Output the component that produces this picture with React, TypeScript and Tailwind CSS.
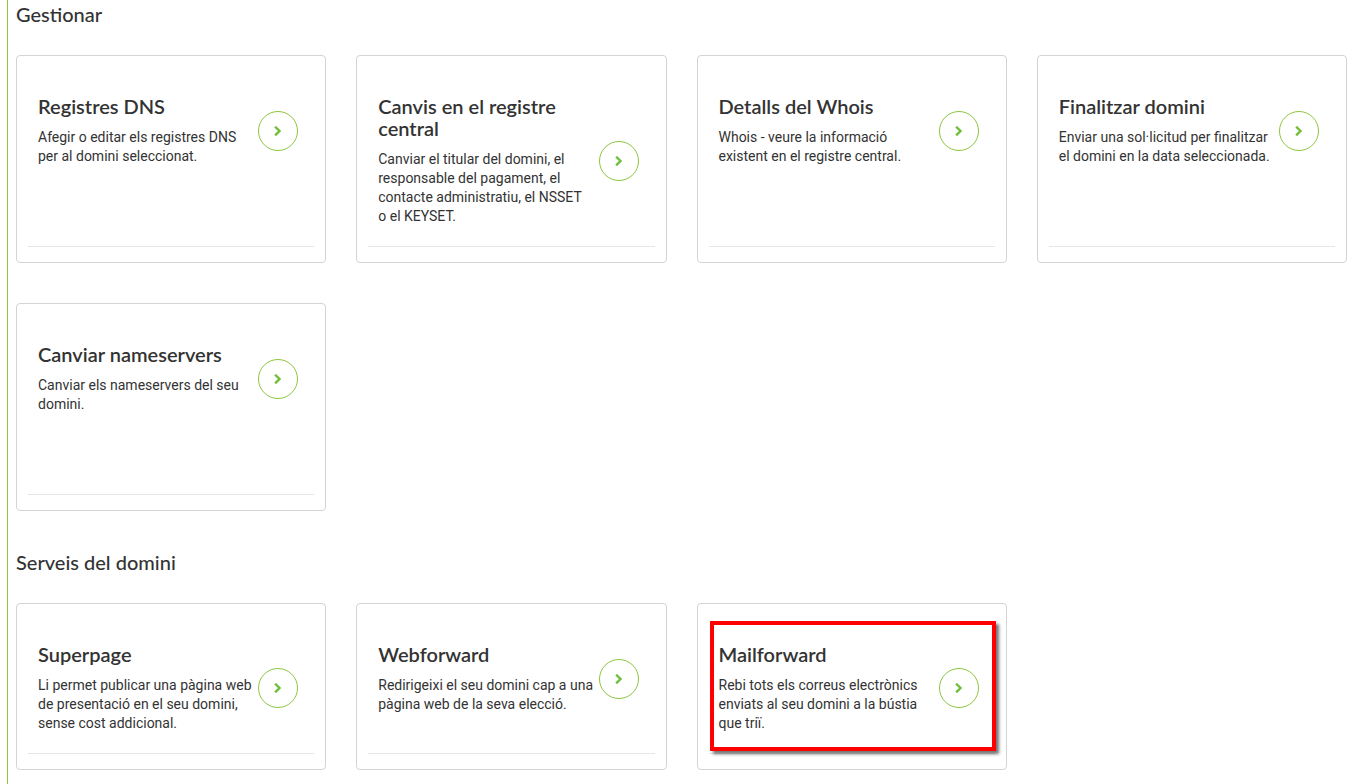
import React from 'react';

type Item = { title: string; text: string; highlight?: boolean };

const gestionar: Item[] = [
  { title: 'Registres DNS', text: 'Afegir o editar els registres DNS per al domini seleccionat.' },
  {
    title: 'Canvis en el registre central',
    text: 'Canviar el titular del domini, el responsable del pagament, el contacte administratiu, el NSSET o\u00a0el KEYSET.',
  },
  { title: 'Detalls del Whois', text: 'Whois - veure la informació existent en el registre central.' },
  { title: 'Finalitzar domini', text: 'Enviar una sol·licitud per finalitzar el domini en la data seleccionada.' },
  { title: 'Canviar nameservers', text: 'Canviar els nameservers del seu domini.' },
];

const serveis: Item[] = [
  { title: 'Superpage', text: 'Li permet publicar una pàgina web de presentació en el seu domini, sense cost addicional.' },
  { title: 'Webforward', text: 'Redirigeixi el seu domini cap a una pàgina web de la seva elecció.' },
  { title: 'Mailforward', text: 'Rebi tots els correus electrònics enviats al seu domini a la bústia que triï.', highlight: true },
];

const titleFont = { fontFamily: 'Lato, "Open Sans", sans-serif' };
const bodyFont = { fontFamily: 'Roboto, "Liberation Sans", sans-serif' };

const Arrow = () => (
  <div className="w-[40px] h-[40px] shrink-0 rounded-full border border-[#8cc63f] flex items-center justify-center">
    <svg width="8" height="10" viewBox="0 0 8 10" fill="none">
      <polyline points="2,1.5 5.5,5 2,8.5" stroke="#6fbf3a" strokeWidth="2.4" strokeLinecap="square" />
    </svg>
  </div>
);

const Card = ({ item }: { item: Item }) => (
  <div className="relative bg-white border border-[#d4d4d4] rounded-[4px] flex flex-col px-[11px]">
    <div className="flex-1 pt-[39px] pb-[20px] pl-[10px] pr-[16px]">
      <div className="flex items-center">
        <div className="flex-1 mr-[3px]">
          <h3 className="text-[20px] leading-[22px] font-semibold text-[#333]" style={titleFont}>
            {item.title}
          </h3>
          <p className="mt-[11px] text-[14px] leading-[19px] text-[#333]" style={bodyFont}>
            {item.text}
          </p>
        </div>
        <Arrow />
      </div>
    </div>
    <div className="border-t border-[#e6e6e6] h-[16px]" />
    {item.highlight && (
      <div className="absolute left-[12px] top-[17px] w-[286px] h-[130px] border-[4px] border-[#ff0000] shadow-[3px_3px_3px_rgba(0,0,0,0.55)]" />
    )}
  </div>
);

const Section = ({ heading, items, className }: { heading: string; items: Item[]; className?: string }) => (
  <section className={className}>
    <h2 className="text-[20px] leading-[28px] font-medium text-[#333]" style={titleFont}>
      {heading}
    </h2>
    <div className="mt-[27px] grid grid-cols-4 auto-rows-fr gap-x-[30px] gap-y-[40px] w-[1331px]">
      {items.map((it) => (
        <Card key={it.title} item={it} />
      ))}
    </div>
  </section>
);

export default function App() {
  return (
    <div className="w-[1356px] h-[784px] overflow-hidden bg-white">
      <div className="ml-[7px] border-l border-[#8cc63f] pl-[8px] h-full">
        <Section heading="Gestionar" items={gestionar} />
        <Section heading="Serveis del domini" items={serveis} className="mt-[37px]" />
      </div>
    </div>
  );
}
